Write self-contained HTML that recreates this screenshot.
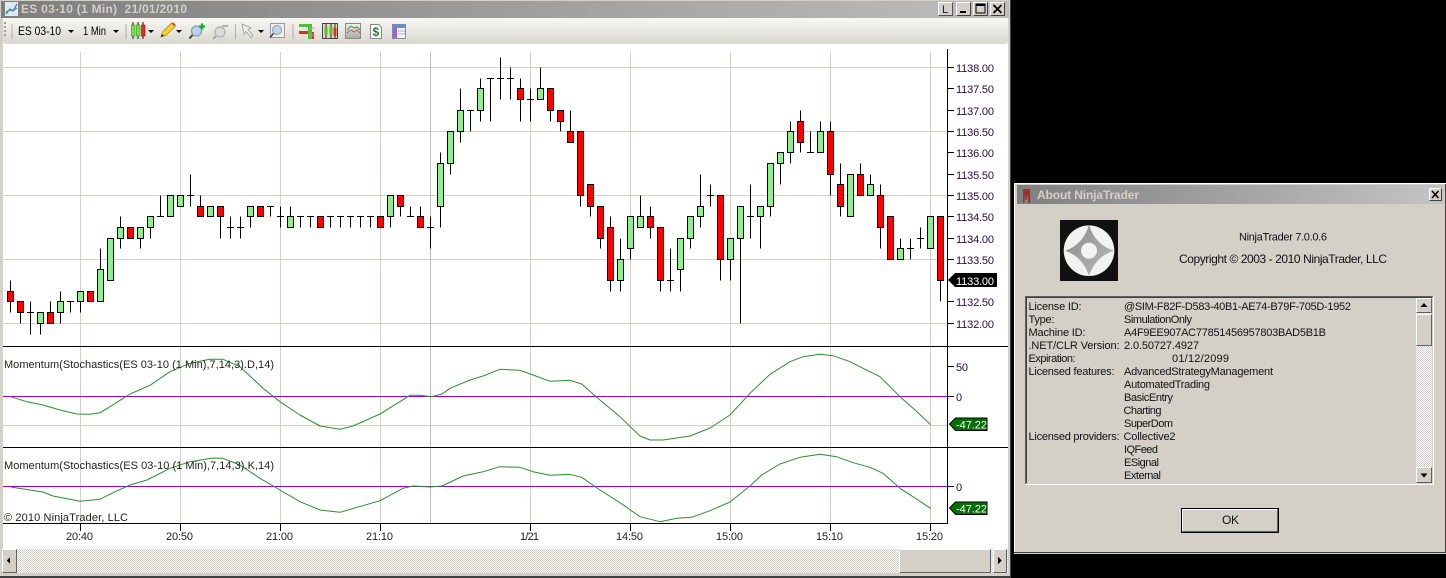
<!DOCTYPE html>
<html><head><meta charset="utf-8"><title>NinjaTrader</title>
<style>
html,body{margin:0;padding:0;background:#000;width:1446px;height:578px;overflow:hidden}
svg{display:block}
text{font-family:"Liberation Sans",sans-serif;font-size:11px;fill:#111}
.p{fill:#2a0a3a}
.t{fill:#222}
.l{font-size:11px;fill:#111}
</style></head><body>
<svg width="1446" height="578" viewBox="0 0 1446 578" xmlns="http://www.w3.org/2000/svg">
<defs>
<linearGradient id="tg" x1="0" x2="1" y1="0" y2="0"><stop offset="0" stop-color="#7e7e7e"/><stop offset="1" stop-color="#bdbdbd"/></linearGradient>
<linearGradient id="dg" x1="0" x2="1" y1="0" y2="0"><stop offset="0" stop-color="#808080"/><stop offset="1" stop-color="#c4c4c4"/></linearGradient>
<linearGradient id="bar" x1="0" x2="0" y1="0" y2="1"><stop offset="0" stop-color="#f8f7f3"/><stop offset="1" stop-color="#d9d7cf"/></linearGradient>
<linearGradient id="star" x1="0" x2="1" y1="0" y2="1"><stop offset="0" stop-color="#8a8a8a"/><stop offset="1" stop-color="#bbbbbb"/></linearGradient>
<linearGradient id="gch" x1="0" x2="0" y1="0" y2="1"><stop offset="0" stop-color="#f2f1ea"/><stop offset="1" stop-color="#a8a8a0"/></linearGradient>
<pattern id="h" width="2" height="2" patternUnits="userSpaceOnUse"><rect width="2" height="2" fill="#fff"/><rect width="1" height="1" fill="#d4d0c8"/><rect x="1" y="1" width="1" height="1" fill="#d4d0c8"/></pattern>
</defs>

<!-- main window -->
<rect x="0" y="0" width="1011" height="578" fill="#d4d0c8"/>
<rect x="0" y="576" width="1011" height="2" fill="#404040"/>
<rect x="1010" y="0" width="1" height="578" fill="#404040"/>
<rect x="1" y="1" width="1008" height="17" fill="url(#tg)"/>
<rect x="3" y="18" width="1005" height="531" fill="#fff"/>
<rect x="3" y="18" width="1005" height="26" rx="3" fill="url(#bar)"/>

<!-- title -->
<rect x="5" y="2" width="13" height="14" fill="#dfe9f5"/>
<path d="M6 14L10 9l3 2 4-7" fill="none" stroke="#2f6fc0" stroke-width="1.2"/>
<path d="M6 12l4-2 3 1 4-3" fill="none" stroke="#3aa04a" stroke-width="1"/>
<text x="21" y="13" textLength="166" style="font-weight:bold;font-size:12px;fill:#d4d0c8">ES 03-10 (1 Min)&#160;&#160;21/01/2010</text>

<g shape-rendering="crispEdges">
<rect x="938" y="2" width="15" height="14" fill="#d4d0c8" stroke="#eee" stroke-width="0"/>
<path d="M938.5 16V2.5H952.5" fill="none" stroke="#fff"/><path d="M938.5 15.5H952.5V2.5" fill="none" stroke="#555"/>
<rect x="956" y="2" width="15" height="14" fill="#d4d0c8"/>
<path d="M956.5 16V2.5H970.5" fill="none" stroke="#fff"/><path d="M956.5 15.5H970.5V2.5" fill="none" stroke="#404040"/>
<rect x="960" y="11" width="6" height="2" fill="#000"/>
<rect x="973" y="2" width="15" height="14" fill="#d4d0c8"/>
<path d="M973.5 16V2.5H987.5" fill="none" stroke="#fff"/><path d="M973.5 15.5H987.5V2.5" fill="none" stroke="#404040"/>
<rect x="976" y="4" width="9" height="9" fill="none" stroke="#000" stroke-width="1"/><rect x="976" y="4" width="9" height="2" fill="#000"/>
<rect x="990" y="2" width="15" height="14" fill="#d4d0c8"/>
<path d="M990.5 16V2.5H1004.5" fill="none" stroke="#fff"/><path d="M990.5 15.5H1004.5V2.5" fill="none" stroke="#404040"/>
</g>
<path d="M993.5 5l8 8M1001.5 5l-8 8" stroke="#000" stroke-width="1.8"/>
<text x="942" y="13" style="font-size:11px;fill:#101060">L</text>

<!-- toolbar -->
<g shape-rendering="crispEdges">
<path d="M4 22h2v2H4zM4 26h2v2H4zM4 30h2v2H4zM4 34h2v2H4z" fill="#a0a0a0"/>
<path d="M12 24v15M126 24v15M235.500 24v15M293 24v15" stroke="#b0aea6" stroke-width="1"/>
</g>
<text x="18" y="35" textLength="43" lengthAdjust="spacingAndGlyphs" style="font-size:12px;fill:#000">ES 03-10</text>
<path d="M68 30h6l-3 3zM113 30h6l-3 3zM148 30h6l-3 3zM176 30h6l-3 3zM258 30h6l-3 3z" fill="#000"/>
<text x="83" y="35" textLength="23" lengthAdjust="spacingAndGlyphs" style="font-size:12px;fill:#000">1 Min</text>

<!-- candle icon -->
<path d="M133 22v17M138 22v17M143 22v17" stroke="#111"/>
<rect x="131.500" y="25" width="3.500" height="11" fill="#7de04a" stroke="#2f8a20" stroke-width=".6"/>
<rect x="136.500" y="25" width="3.500" height="11" fill="#7de04a" stroke="#2f8a20" stroke-width=".6"/>
<rect x="141.500" y="25" width="3.500" height="11" fill="#e03020" stroke="#901010" stroke-width=".6"/>
<!-- pencil -->
<path d="M161 37l1.500-5 9-9 3.500 3.500-9 9z" fill="#f5d030" stroke="#a07a10" stroke-width=".7"/>
<path d="M171.500 23l3.500 3.500 .8-1.500-2.800-2.800z" fill="#e04040"/>
<path d="M161 37l1-3 2 2z" fill="#222"/>
<!-- zoom in -->
<circle cx="196.500" cy="31" r="5" fill="#b8d4f0" stroke="#8a9aa8" stroke-width="1.200"/>
<path d="M192.500 35l-3 3.500" stroke="#444" stroke-width="2"/>
<path d="M199 26.500h6M202 23.500v6" stroke="#10b030" stroke-width="2.200"/>
<!-- zoom out -->
<circle cx="220" cy="32" r="5" fill="#dcdcd8" stroke="#b0b0ac" stroke-width="1.200"/>
<path d="M216 36l-3 3" stroke="#a8a8a4" stroke-width="2"/>
<path d="M222 26h6" stroke="#b0b0ac" stroke-width="2"/>
<!-- cursor -->
<path d="M242 24l9 4-3 1.500 5 6-2 2-5-6-2 3z" fill="#f0f0ec" stroke="#a8a8a4" stroke-width="1"/>
<!-- zoom box -->
<rect x="270.500" y="23.500" width="14" height="14" fill="#f0efe8" stroke="#999"/>
<circle cx="277" cy="30" r="4.500" fill="#bcd4ec" stroke="#8a9aa8"/>
<path d="M273.500 33.500l-3.500 4" stroke="#444" stroke-width="1.600"/>
<!-- bars icon -->
<rect x="299" y="24" width="9" height="3" fill="#50c030"/><rect x="308" y="24" width="4" height="15" fill="#50c030"/>
<rect x="299" y="31" width="9" height="3" fill="#e03020"/><rect x="312" y="32" width="2" height="7" fill="#e03020"/>
<path d="M309 28h6M309 35h6" stroke="#aaa"/>
<!-- candles box -->
<rect x="322.500" y="23.500" width="15" height="15" fill="#e8dcc0" stroke="#444"/>
<path d="M326 24v14M331 24v14M335 24v14" stroke="#222"/>
<rect x="324.500" y="27" width="3" height="8" fill="#50c030"/><rect x="329.500" y="26" width="3" height="8" fill="#50c030"/><rect x="333.500" y="28" width="3" height="8" fill="#e03020"/>
<!-- chart -->
<rect x="345.500" y="23.500" width="15" height="15" fill="url(#gch)" stroke="#888"/>
<path d="M347 30l4-4 3 2 3-1 3 3" fill="none" stroke="#30a050"/><path d="M347 33l4-3 3 2 3-2 3 3" fill="none" stroke="#d05050"/>
<!-- doc -->
<path d="M370.500 24.500h8l3 3v11h-11z" fill="#fff" stroke="#888"/>
<text x="372.500" y="36" style="font-size:12px;font-weight:bold;fill:#208030">$</text>
<!-- table -->
<rect x="392.500" y="24.500" width="13" height="14" fill="#f4f4fa" stroke="#8088a8"/>
<rect x="393" y="25" width="12" height="3" fill="#6090c8"/><rect x="393" y="28" width="4" height="10" fill="#a060d0"/>
<path d="M398 31h7M398 34h7" stroke="#b0b0c8"/>

<!-- grid -->
<g shape-rendering="crispEdges" stroke="#d4d0c8" fill="none">
<path d="M3 67.500H947M3 131.500H947M3 195.500H947M3 259.500H947M3 323.500H947M3 425.500H947"/>
<path d="M80.500 52V523M180.500 52V523M280.500 52V523M380.500 52V523M530.500 52V523M630.500 52V523M730.500 52V523M830.500 52V523M930.500 52V523"/>
<path d="M430.500 52V523" stroke="#bdbdb8"/>
</g>

<!-- candle wicks -->
<path shape-rendering="crispEdges" fill="none" stroke="#000" d="M10.500 280.500V312.500M20.500 301.500V323.500M30.500 301.500V334.500M27 312.500h7M40.500 312.500V334.500M50.500 301.500V323.500M60.500 291.500V323.500M70.500 301.500V312.500M67 301.500h7M80.500 291.500V312.500M100.500 248.500V301.500M120.500 216.500V248.500M140.500 227.500V248.500M150.500 216.500V238.500M160.500 195.500V216.500M157 216.500h7M190.500 174.500V206.500M187 195.500h7M200.500 195.500V216.500M220.500 206.500V238.500M230.500 216.500V238.500M227 227.500h7M240.500 216.500V238.500M237 227.500h7M250.500 206.500V227.500M270.500 206.500V216.500M267 206.500h7M280.500 206.500V227.500M277 216.500h7M290.500 206.500V227.500M300.500 216.500V227.500M297 216.500h7M310.500 216.500V227.500M307 216.500h7M330.500 216.500V227.500M327 216.500h7M340.500 216.500V227.500M337 216.500h7M350.500 216.500V227.500M347 216.500h7M360.500 216.500V227.500M357 216.500h7M370.500 216.500V227.500M367 216.500h7M390.500 195.500V227.500M400.500 195.500V216.500M410.500 206.500V216.500M407 216.500h7M420.500 206.500V227.500M430.500 216.500V248.500M427 227.500h7M440.500 152.500V227.500M450.500 131.500V174.500M460.500 88.500V142.500M470.500 110.500V131.500M467 110.500h7M480.500 78.500V121.500M490.500 78.500V121.500M487 78.500h7M500.500 57.500V99.500M497 78.500h7M510.500 67.500V99.500M507 78.500h7M520.500 78.500V121.500M530.500 88.500V121.500M527 99.500h7M540.500 67.500V99.500M550.500 88.500V121.500M560.500 110.500V131.500M570.500 110.500V142.500M580.500 131.500V206.500M590.500 184.500V216.500M600.500 206.500V248.500M610.500 216.500V291.500M620.500 238.500V291.500M630.500 216.500V259.500M640.500 195.500V227.500M650.500 206.500V238.500M660.500 227.500V291.500M670.500 248.500V291.500M667 280.500h7M680.500 238.500V291.500M690.500 216.500V248.500M700.500 174.500V227.500M710.500 184.500V206.500M707 195.500h7M720.500 195.500V280.500M730.500 238.500V280.500M740.500 206.500V323.500M750.500 184.500V238.500M747 216.500h7M760.500 206.500V248.500M770.500 163.500V216.500M780.500 152.500V184.500M790.500 121.500V163.500M800.500 110.500V152.500M810.500 131.500V152.500M807 152.500h7M820.500 121.500V152.500M830.500 121.500V195.500M840.500 163.500V216.500M860.500 163.500V195.500M870.500 174.500V195.500M880.500 184.500V248.500M900.500 238.500V259.500M910.500 238.500V259.500M907 248.500h7M920.500 227.500V248.500M917 238.500h7M940.500 216.500V301.500"/>

<!-- red bodies -->
<path shape-rendering="crispEdges" fill="#f00" stroke="#000" d="M7.500 291.500h6V301.500h-6zM17.500 301.500h6V312.500h-6zM47.500 312.500h6V323.500h-6zM87.500 291.500h6V301.500h-6zM127.500 227.500h6V238.500h-6zM197.500 206.500h6V216.500h-6zM217.500 206.500h6V216.500h-6zM257.500 206.500h6V216.500h-6zM317.500 216.500h6V227.500h-6zM377.500 216.500h6V227.500h-6zM397.500 195.500h6V206.500h-6zM417.500 216.500h6V227.500h-6zM517.500 88.500h6V99.500h-6zM547.500 88.500h6V110.500h-6zM557.500 110.500h6V121.500h-6zM567.500 131.500h6V142.500h-6zM577.500 131.500h6V195.500h-6zM587.500 184.500h6V206.500h-6zM597.500 206.500h6V238.500h-6zM607.500 227.500h6V280.500h-6zM647.500 216.500h6V227.500h-6zM657.500 227.500h6V280.500h-6zM717.500 195.500h6V259.500h-6zM797.500 121.500h6V142.500h-6zM827.500 131.500h6V174.500h-6zM837.500 184.500h6V206.500h-6zM857.500 174.500h6V195.500h-6zM877.500 195.500h6V227.500h-6zM887.500 216.500h6V259.500h-6zM937.500 216.500h6V280.500h-6z"/>
<!-- green bodies -->
<path shape-rendering="crispEdges" fill="#90ee90" stroke="#000" d="M37.500 312.500h6V323.500h-6zM57.500 301.500h6V312.500h-6zM77.500 291.500h6V301.500h-6zM97.500 269.500h6V301.500h-6zM107.500 238.500h6V280.500h-6zM117.500 227.500h6V238.500h-6zM137.500 227.500h6V238.500h-6zM147.500 216.500h6V227.500h-6zM167.500 195.500h6V216.500h-6zM177.500 195.500h6V206.500h-6zM207.500 206.500h6V216.500h-6zM247.500 206.500h6V216.500h-6zM287.500 216.500h6V227.500h-6zM387.500 195.500h6V216.500h-6zM437.500 163.500h6V206.500h-6zM447.500 131.500h6V163.500h-6zM457.500 110.500h6V131.500h-6zM477.500 88.500h6V110.500h-6zM537.500 88.500h6V99.500h-6zM617.500 259.500h6V280.500h-6zM627.500 216.500h6V248.500h-6zM637.500 216.500h6V227.500h-6zM677.500 238.500h6V269.500h-6zM687.500 216.500h6V238.500h-6zM697.500 206.500h6V216.500h-6zM727.500 238.500h6V259.500h-6zM737.500 206.500h6V238.500h-6zM757.500 206.500h6V216.500h-6zM767.500 163.500h6V206.500h-6zM777.500 152.500h6V163.500h-6zM787.500 131.500h6V152.500h-6zM817.500 131.500h6V152.500h-6zM847.500 174.500h6V216.500h-6zM867.500 184.500h6V195.500h-6zM897.500 248.500h6V259.500h-6zM927.500 216.500h6V248.500h-6z"/>

<!-- purple lines -->
<g shape-rendering="crispEdges" stroke="#9400d3">
<path d="M3 396.500H947M3 486.500H947"/>
</g>

<!-- momentum lines -->
<path fill="none" stroke="#2a8f2a" stroke-width="1" stroke-linejoin="round" d="M10.700 396.700L26.700 401.700 43 405 60 410 77 414 90 414.300 100 412.700 110 406.700 130 394 150 385.300 170 371.700 190 363.300 210 359.300 223 359.300 240 366.700 263 388.300 280 401.700 300 415 320 426 340 429.300 353 426 380 414 410 395.300 420 395.300 432 396.700 442 394 450 388.300 470 380 483 376 500 369.300 520 370.300 533 375 550 381.300 570 380.300 581.700 384 596.700 397.300 620 416.700 640 436 650 440 663 440 690 436 710 428 730 415 750 393.300 770 374.300 790 361.700 803 356.700 820 354.300 833 355.700 850 361.700 863 368.300 880 376.700 900 396.700 917 411.700 930.700 424.700"/>
<path fill="none" stroke="#2a8f2a" stroke-width="1" stroke-linejoin="round" d="M10.700 487L30 490 43 492 53 496 80 501.300 100 499.300 113 492.700 130 485 147 480 170 468.300 190 461.700 213 458 223 458.300 240 465 260 478.300 280 490 300 501.700 320 510 340 512.300 380 500.700 403 488.300 413 486 430 487 442 486 463 476 483 471.700 500 466.700 520 467.300 533 471.700 550 475.300 570 474.300 581.700 477.300 600 490 620 502.700 640 516.700 660 521.700 676.700 518.300 691.700 517.300 710 510.700 730 502 750 486 761.700 475 780 464 800 457.300 820 454.300 836.700 456.700 853 462.700 870 467.300 883 473.300 900 488.300 917 499.300 931 508.700"/>

<!-- axes -->
<g shape-rendering="crispEdges" stroke="#000" fill="none">
<path d="M947.500 49V523.500"/>
<path d="M3 346.500H1008M3 447.500H1008M3 523.500H948"/>
<path d="M947 67.500h7M947 88.500h7M947 110.500h7M947 131.500h7M947 152.500h7M947 174.500h7M947 195.500h7M947 216.500h7M947 238.500h7M947 259.500h7M947 301.500h7M947 323.500h7M947 366.500h7M947 396.500h7M947 486.500h7"/>
<path d="M80.500 523v8M180.500 523v8M280.500 523v8M380.500 523v8M530.500 523v8M630.500 523v8M730.500 523v8M830.500 523v8M930.500 523v8"/>
</g>

<!-- price labels -->
<g class="p">
<text class="p" x="956" y="72" textLength="38">1138.00</text>
<text class="p" x="956" y="93" textLength="38">1137.50</text>
<text class="p" x="956" y="115" textLength="38">1137.00</text>
<text class="p" x="956" y="136" textLength="38">1136.50</text>
<text class="p" x="956" y="157" textLength="38">1136.00</text>
<text class="p" x="956" y="179" textLength="38">1135.50</text>
<text class="p" x="956" y="200" textLength="38">1135.00</text>
<text class="p" x="956" y="221" textLength="38">1134.50</text>
<text class="p" x="956" y="243" textLength="38">1134.00</text>
<text class="p" x="956" y="264" textLength="38">1133.50</text>
<text class="p" x="956" y="306" textLength="38">1132.50</text>
<text class="p" x="956" y="328" textLength="38">1132.00</text>
</g>
<path d="M948 280l7-7h42v14h-42z" fill="#000"/>
<text x="956" y="285" textLength="38" style="fill:#fff">1133.00</text>

<text class="p" x="956" y="371" textLength="12">50</text>
<text class="p" x="956" y="401" textLength="6">0</text>
<text class="p" x="956" y="491" textLength="6">0</text>

<path d="M949.500 424l6-6h31.500v12.500h-31.500z" fill="#007000" stroke="#000"/>
<text x="956" y="428.500" textLength="31" style="fill:#fff">-47.22</text>
<path d="M949.500 508l6-6h31.500v12.500h-31.500z" fill="#007000" stroke="#000"/>
<text x="956" y="512.500" textLength="31" style="fill:#fff">-47.22</text>

<!-- indicator labels -->
<text class="t" x="4" y="368" textLength="270">Momentum(Stochastics(ES 03-10 (1 Min),7,14,3).D,14)</text>
<text class="t" x="4" y="469" textLength="270">Momentum(Stochastics(ES 03-10 (1 Min),7,14,3).K,14)</text>
<text class="t" x="4" y="521" textLength="124">© 2010 NinjaTrader, LLC</text>

<!-- time labels -->
<g>
<text class="t" x="66" y="540" textLength="27">20:40</text>
<text class="t" x="166" y="540" textLength="27">20:50</text>
<text class="t" x="266" y="540" textLength="27">21:00</text>
<text class="t" x="366" y="540" textLength="27">21:10</text>
<text class="t" x="520" y="540" textLength="19">1/21</text>
<text class="t" x="616" y="540" textLength="27">14:50</text>
<text class="t" x="716" y="540" textLength="27">15:00</text>
<text class="t" x="816" y="540" textLength="27">15:10</text>
<text class="t" x="916" y="540" textLength="27">15:20</text>
</g>

<!-- bottom scrollbar -->
<g shape-rendering="crispEdges">
<rect x="3" y="549" width="1005" height="24" fill="url(#h)"/>
<rect x="2" y="549" width="15" height="24" fill="#d4d0c8"/>
<path d="M2.500 573V549.500H16.500" fill="none" stroke="#fff"/><path d="M2.500 572.500H16.500V549.500" fill="none" stroke="#606060"/>
<rect x="899" y="549" width="92" height="24" fill="#d4d0c8"/>
<path d="M899.500 573V549.500H990.500" fill="none" stroke="#fff"/><path d="M899.500 572.500H990.500V549.500" fill="none" stroke="#606060"/>
<rect x="993" y="549" width="14" height="24" fill="#d4d0c8"/>
<path d="M993.500 573V549.500H1006.500" fill="none" stroke="#fff"/><path d="M993.500 572.500H1006.500V549.500" fill="none" stroke="#606060"/>
<path d="M10 557v7l-3-3.500z" fill="#000"/>
<path d="M998 557v7l4-3.500z" fill="#000"/>
</g>

<!-- dialog -->
<rect x="1014" y="183" width="432" height="371" fill="#d4d0c8"/>
<path shape-rendering="crispEdges" d="M1014.500 554V183.500H1446" fill="none" stroke="#fff"/>
<path shape-rendering="crispEdges" d="M1014 552.500H1445.500V184" fill="none" stroke="#404040"/>
<rect x="1017" y="185" width="427" height="19" fill="url(#dg)"/>
<path d="M1023 189h7v14h-2v-9l-1.500 6h-1l-1-6v9h-1.500z" fill="#9a3030"/>
<text x="1037" y="199" textLength="102" style="font-weight:bold;font-size:12px;fill:#d4d0c8">About NinjaTrader</text>
<g shape-rendering="crispEdges">
<rect x="1429" y="188" width="13" height="13" fill="#d4d0c8"/>
<path d="M1429.500 201V188.500H1441.500" fill="none" stroke="#fff"/><path d="M1429.500 200.500H1441.500V188.500" fill="none" stroke="#404040"/>
</g>
<path d="M1432 191l6.500 7M1438.500 191l-6.500 7" stroke="#000" stroke-width="1.600"/>

<!-- logo -->
<rect x="1060" y="220" width="58" height="61" fill="#111"/>
<circle cx="1089" cy="250.700" r="25.300" fill="#f2f2f2"/>
<path d="M1089 225Q1095 244.500 1113.700 250.700Q1095 257 1089 276Q1083 257 1065.300 250.700Q1083 244.500 1089 225z" fill="url(#star)"/>
<circle cx="1089" cy="250.700" r="8" fill="#f4f4f4"/>

<text x="1239" y="240.500" textLength="88" style="font-size:11px;fill:#111">NinjaTrader 7.0.0.6</text>
<text x="1179" y="263" textLength="208" style="font-size:12px;fill:#111">Copyright © 2003 - 2010 NinjaTrader, LLC</text>

<!-- license box -->
<g shape-rendering="crispEdges">
<path d="M1025.500 484V296.500H1433" fill="none" stroke="#606060"/>
<path d="M1026.500 483V297.500H1432" fill="none" stroke="#404040"/>
<path d="M1025.500 484.500H1433.500V296" fill="none" stroke="#fff"/>
<rect x="1416" y="298" width="16" height="185" fill="url(#h)"/>
<rect x="1416" y="298" width="16" height="15" fill="#d4d0c8"/>
<path d="M1416.500 313V298.500H1431.500" fill="none" stroke="#fff"/><path d="M1416.500 312.500H1431.500V298.500" fill="none" stroke="#606060"/>
<rect x="1416" y="314" width="16" height="32" fill="#d4d0c8"/>
<path d="M1416.500 346V314.500H1431.500" fill="none" stroke="#fff"/><path d="M1416.500 345.500H1431.500V314.500" fill="none" stroke="#606060"/>
<rect x="1416" y="467" width="16" height="16" fill="#d4d0c8"/>
<path d="M1416.500 483V467.500H1431.500" fill="none" stroke="#fff"/><path d="M1416.500 482.500H1431.500V467.500" fill="none" stroke="#606060"/>
</g>
<path d="M1424 303l3.500 4h-7z" fill="#000"/>
<path d="M1424 477.500l3.500-4h-7z" fill="#000"/>

<g class="l">
<text class="l" x="1028.500" y="310" textLength="53">License ID:</text>
<text class="l" x="1124" y="310" textLength="227">@SIM-F82F-D583-40B1-AE74-B79F-705D-1952</text>
<text class="l" x="1028.500" y="323" textLength="26">Type:</text>
<text class="l" x="1124" y="323" textLength="68">SimulationOnly</text>
<text class="l" x="1028.500" y="336" textLength="57">Machine ID:</text>
<text class="l" x="1124" y="336" textLength="202">A4F9EE907AC77851456957803BAD5B1B</text>
<text class="l" x="1028.500" y="349" textLength="91">.NET/CLR Version:</text>
<text class="l" x="1124" y="349" textLength="75">2.0.50727.4927</text>
<text class="l" x="1028.500" y="362" textLength="47">Expiration:</text>
<text class="l" x="1172" y="362" textLength="57">01/12/2099</text>
<text class="l" x="1028.500" y="375" textLength="86">Licensed features:</text>
<text class="l" x="1124" y="375" textLength="149">AdvancedStrategyManagement</text>
<text class="l" x="1124" y="388" textLength="86">AutomatedTrading</text>
<text class="l" x="1124" y="401" textLength="49">BasicEntry</text>
<text class="l" x="1123.500" y="414" textLength="38">Charting</text>
<text class="l" x="1124" y="427" textLength="49">SuperDom</text>
<text class="l" x="1028.500" y="440" textLength="91">Licensed providers:</text>
<text class="l" x="1123.500" y="440" textLength="52">Collective2</text>
<text class="l" x="1124" y="453" textLength="34">IQFeed</text>
<text class="l" x="1124" y="466" textLength="35">ESignal</text>
<text class="l" x="1124" y="479" textLength="37">External</text>
</g>

<!-- OK -->
<g shape-rendering="crispEdges">
<rect x="1181.500" y="508.500" width="97" height="24" fill="#d4d0c8" stroke="#000"/>
<path d="M1182.500 531V509.500H1277" fill="none" stroke="#fff"/>
<path d="M1182.500 531.500H1277.500V509.500" fill="none" stroke="#606060"/>
</g>
<text x="1222" y="524" textLength="17" style="font-size:12px;fill:#111">OK</text>
</svg>
</body></html>
